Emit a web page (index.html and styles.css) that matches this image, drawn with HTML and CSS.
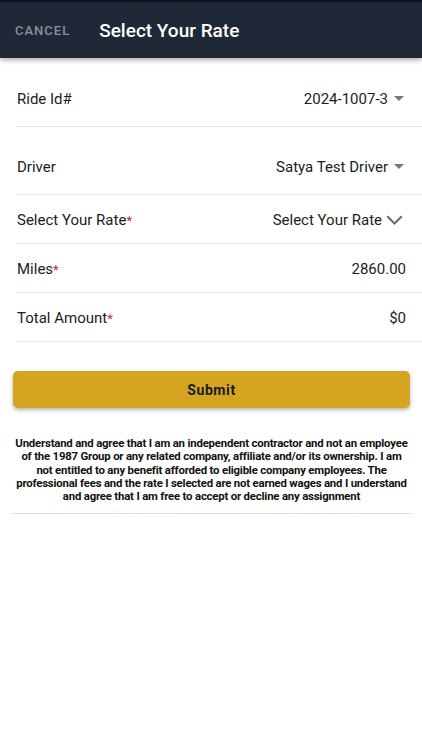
FILE: index.html
```html
<!DOCTYPE html>
<html lang="en">
<head>
  <meta charset="UTF-8" />
  <meta name="viewport" content="width=device-width, initial-scale=1.0"/>
  <title>Select Your Rate</title>
  <link rel="stylesheet" href="styles.css">
</head>
<body>

  <div class="top-bar">
    <span class="cancel">CANCEL</span>
    <h1 class="title">Select Your Rate</h1>
  </div>

  <div class="form">
    <div class="row tall">
      <span class="label">Ride Id#</span>
      <span class="value">2024-1007-3 <span class="caret"></span></span>
    </div>
    <div class="row tall">
      <span class="label">Driver</span>
      <span class="value">Satya Test Driver <span class="caret"></span></span>
    </div>
    <div class="row">
      <span class="label">Select Your Rate<span class="req">*</span></span>
      <span class="value">Select Your Rate
        <svg class="chevron" width="17" height="10" viewBox="0 0 17 10">
          <polyline points="1.2,1.2 8.5,8.5 15.8,1.2" fill="none" stroke="#6b6b6b" stroke-width="2"/>
        </svg>
      </span>
    </div>
    <div class="row">
      <span class="label">Miles<span class="req">*</span></span>
      <span class="value">2860.00</span>
    </div>
    <div class="row">
      <span class="label">Total Amount<span class="req">*</span></span>
      <span class="value">$0</span>
    </div>
  </div>

  <button class="submit-btn">Submit</button>

  <p class="disclaimer">Understand and agree that I am an independent contractor and not an employee of the 1987 Group or any related company, affiliate and/or its ownership. I am not entitled to any benefit afforded to eligible company employees. The professional fees and the rate I selected are not earned wages and I understand and agree that I am free to accept or decline any assignment</p>

</body>
</html>
```

FILE: styles.css
```css
body {
  margin: 0;
  background: #fff;
  color: #1c1c1c;
  font-family: Roboto, 'Noto Sans', sans-serif;
}

.top-bar {
  height: 56px;
  border-top: 2px solid #0e131b;
  background: #1f2836;
  display: flex;
  align-items: center;
  box-shadow: 0 2px 5px rgba(0, 0, 0, 0.35);
}

.cancel {
  margin-left: 15px;
  font-size: 13px;
  letter-spacing: 1px;
  color: #8a9099;
  font-weight: 500;
}

.title {
  margin: 0 0 0 29px;
  font-size: 19px;
  font-weight: 500;
  color: #fff;
}

.form {
  margin: 1px 0 0 16px;
}

.row {
  box-sizing: border-box;
  height: 49px;
  display: flex;
  justify-content: space-between;
  align-items: center;
  padding: 1px 16px 0 1px;
  font-size: 15px;
  line-height: 18px;
  border-bottom: 1px solid #e6e6e6;
}

.row.tall {
  height: 68px;
  padding-top: 12px;
}

.req {
  color: #c62828;
  font-size: 13px;
  line-height: 0;
}

.value {
  display: flex;
  align-items: center;
}

.caret {
  display: inline-block;
  margin-left: 6px;
  margin-right: 2px;
  width: 0;
  height: 0;
  border-left: 5px solid transparent;
  border-right: 5px solid transparent;
  border-top: 5px solid #777;
}

.chevron {
  margin-left: 4px;
  margin-right: 3px;
}

.submit-btn {
  display: block;
  margin: 29px 12px 0 13px;
  width: 397px;
  height: 37px;
  border: none;
  border-radius: 5px;
  background: #d5a521;
  color: #1a1a1a;
  font-family: Roboto, sans-serif;
  font-size: 14px;
  font-weight: 700;
  letter-spacing: 0.6px;
  box-shadow: 0 2px 4px rgba(0, 0, 0, 0.3);
}

.disclaimer {
  margin: 29px 10px 0 11px;
  padding: 0 2px 10px;
  text-align: center;
  font-size: 11.4px;
  font-weight: 700;
  letter-spacing: -0.2px;
  line-height: 13.3px;
  color: #111;
  border-bottom: 1px solid #e2e2e2;
}
```
